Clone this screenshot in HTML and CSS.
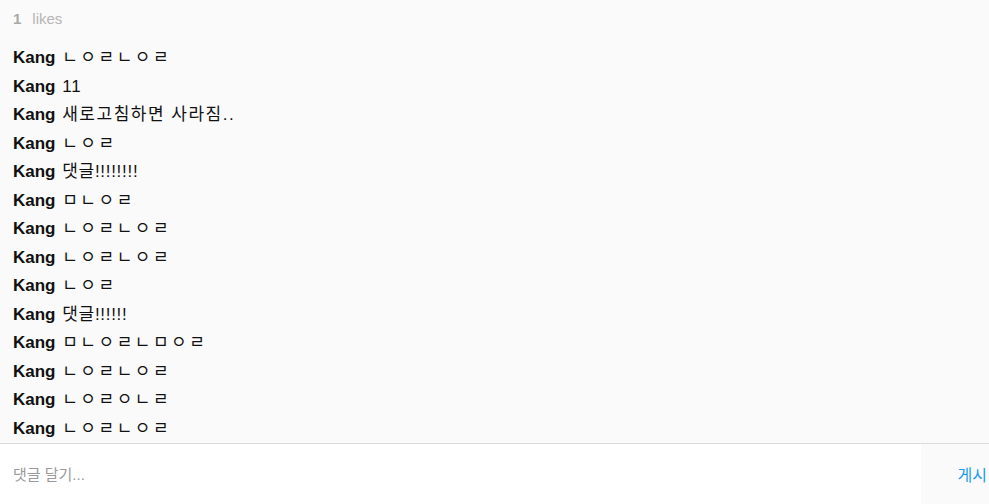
FILE: index.html
```html
<!DOCTYPE html>
<html lang="ko">
<head>
<meta charset="utf-8">
<link rel="stylesheet" href="styles.css">
</head>
<body>
<div class="panel">
  <div class="likes"><span class="count">1</span><span class="label">likes</span></div>
  <ul class="comments">
    <li><b>Kang</b> <span class="msg jamo">ㄴㅇㄹㄴㅇㄹ</span></li>
    <li><b>Kang</b> <span class="msg">11</span></li>
    <li><b>Kang</b> <span class="msg wide">새로고침하면 사라짐..</span></li>
    <li><b>Kang</b> <span class="msg jamo">ㄴㅇㄹ</span></li>
    <li><b>Kang</b> <span class="msg">댓글!!!!!!!!</span></li>
    <li><b>Kang</b> <span class="msg jamo">ㅁㄴㅇㄹ</span></li>
    <li><b>Kang</b> <span class="msg jamo">ㄴㅇㄹㄴㅇㄹ</span></li>
    <li><b>Kang</b> <span class="msg jamo">ㄴㅇㄹㄴㅇㄹ</span></li>
    <li><b>Kang</b> <span class="msg jamo">ㄴㅇㄹ</span></li>
    <li><b>Kang</b> <span class="msg">댓글!!!!!!</span></li>
    <li><b>Kang</b> <span class="msg jamo">ㅁㄴㅇㄹㄴㅁㅇㄹ</span></li>
    <li><b>Kang</b> <span class="msg jamo">ㄴㅇㄹㄴㅇㄹ</span></li>
    <li><b>Kang</b> <span class="msg jamo">ㄴㅇㄹㅇㄴㄹ</span></li>
    <li><b>Kang</b> <span class="msg jamo">ㄴㅇㄹㄴㅇㄹ</span></li>
  </ul>
  <form class="composer">
    <input class="field" type="text" placeholder="댓글 달기...">
    <button class="post" type="button">게시</button>
  </form>
</div>
</body>
</html>
```
FILE: styles.css
```css
* { box-sizing: border-box; }
html, body { margin: 0; padding: 0; }
body {
  background: #fafafa;
  font-family: "Liberation Sans", "Noto Sans CJK KR", sans-serif;
  color: #111;
}
.panel {
  display: flex;
  flex-direction: column;
  width: 989px;
  height: 504px;
}
.likes {
  height: 44px;
  padding: 9px 0 0 13px;
  font-size: 15px;
  line-height: 20px;
  display: flex;
  gap: 11px;
  color: #b5b5b5;
}
.likes .count { font-weight: bold; color: #a8a8a8; }
.comments {
  list-style: none;
  margin: 0;
  padding: 0 0 0 13px;
}
.comments li {
  font-size: 17px;
  line-height: 28.5px;
  height: 28.5px;
  white-space: nowrap;
}
.comments b { font-weight: bold; margin-right: 2px; }
.msg { letter-spacing: 0.7px; }
.msg.wide { letter-spacing: 1.5px; }
.msg.jamo { letter-spacing: 2.5px; }
.composer {
  display: flex;
  margin: 0;
  border-top: 1px solid #dbdbdb;
  flex: 1;
}
.field {
  flex: 1;
  border: 0;
  outline: 0;
  background: #fff;
  padding: 0 13px;
  font-family: inherit;
  font-size: 15px;
  color: #222;
}
.field::placeholder { color: #9a9a9a; }
.post {
  width: 68px;
  border: 0;
  background: #fafafa;
  color: #1a9cf0;
  font-family: inherit;
  font-size: 16px;
  text-align: right;
  padding: 0 2px 0 0;
}
```
